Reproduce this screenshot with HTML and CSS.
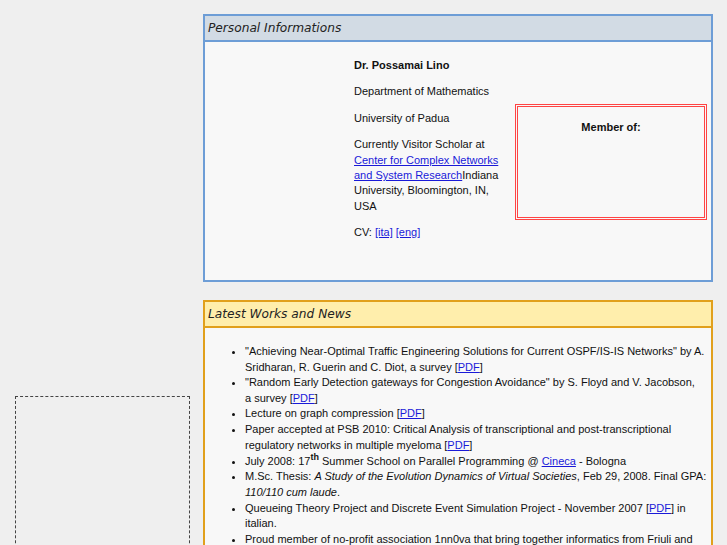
FILE: index.html
```html
<!DOCTYPE html>
<html>
<head>
<meta charset="utf-8">
<title>Possamai Lino</title>
<link rel="stylesheet" href="styles.css">
</head>
<body>
<div class="page">
  <aside class="side">
    <div class="dashed"></div>
  </aside>
  <main class="main">
    <section class="box box-blue">
      <h2 class="box-title">Personal Informations</h2>
      <div class="box-body info">
        <div class="info-text">
          <p><b>Dr. Possamai Lino</b></p>
          <p>Department of Mathematics</p>
          <p>University of Padua</p>
          <p>Currently Visitor Scholar at <a href="#">Center for Complex Networks and System Research</a>Indiana University, Bloomington, IN, USA</p>
          <p>CV: <a href="#">[ita]</a> <a href="#">[eng]</a></p>
        </div>
        <div class="member">
          <p><b>Member of:</b></p>
        </div>
      </div>
    </section>
    <section class="box box-yellow">
      <h2 class="box-title">Latest Works and News</h2>
      <div class="box-body">
        <ul class="news">
          <li>"Achieving Near-Optimal Traffic Engineering Solutions for Current OSPF/IS-IS Networks" by A. Sridharan, R. Guerin and C. Diot, a survey [<a href="#">PDF</a>]</li>
          <li>"Random Early Detection gateways for Congestion Avoidance" by S. Floyd and V. Jacobson, a&nbsp;survey [<a href="#">PDF</a>]</li>
          <li>Lecture on graph compression [<a href="#">PDF</a>]</li>
          <li>Paper accepted at PSB 2010: Critical Analysis of transcriptional and post-transcriptional regulatory networks in multiple myeloma [<a href="#">PDF</a>]</li>
          <li>July 2008: 17<sup>th</sup> Summer School on Parallel Programming @ <a href="#">Cineca</a> - Bologna</li>
          <li>M.Sc. Thesis: <i>A Study of the Evolution Dynamics of Virtual Societies</i>, Feb 29, 2008. Final GPA: <i>110/110 cum laude</i>.</li>
          <li>Queueing Theory Project and Discrete Event Simulation Project - November 2007 [<a href="#">PDF</a>] in italian.</li>
          <li>Proud member of no-profit association 1nn0va that bring together informatics from Friuli and Veneto.</li>
        </ul>
      </div>
    </section>
  </main>
</div>
</body>
</html>
```
FILE: styles.css
```css
html, body {
  margin: 0;
  padding: 0;
}
body {
  background: #efefef;
  font-family: "Liberation Sans", Arial, sans-serif;
  font-size: 11px;
  color: #111;
}
.page {
  display: flex;
  align-items: flex-start;
  padding-top: 14px;
}
.side {
  width: 203px;
  flex: none;
  padding-top: 382px;
}
.dashed {
  margin-left: 15px;
  width: 173px;
  height: 200px;
  border: 1px dashed #444;
}
.main {
  width: 510px;
  flex: none;
}
.box {
  border: 2px solid #6d9dd6;
  background: #f8f8f8;
  margin-bottom: 18px;
}
.box-title {
  margin: 0;
  font-family: "DejaVu Sans", Verdana, sans-serif;
  font-style: italic;
  font-weight: normal;
  font-size: 12.2px;
  height: 24px;
  line-height: 24px;
  padding-left: 3px;
  border-bottom: 2px solid #6d9dd6;
  background: #d2dbe4;
  color: #222;
}
.box-yellow {
  border-color: #e1a01c;
}
.box-yellow .box-title {
  border-bottom-color: #e1a01c;
  background: #ffeeac;
}
.box-body {
  padding: 4px 0;
}
.info {
  display: flex;
  height: 230px;
  padding: 5px 0 3px 149px;
}
.info p {
  margin: 11px 0;
  line-height: 15.4px;
}
.info-text {
  width: 153px;
  align-self: flex-start;
}
.member {
  margin-left: 8px;
  width: 186px;
  height: 110px;
  border: 3px double #ff4444;
  align-self: center;
  text-align: center;
}
.member p {
  margin: 13px 0 0;
}
a {
  color: #1a1ad8;
}
.news {
  margin: 12px 3px 0 0;
  padding-left: 40px;
  line-height: 15.6px;
}
.news sup {
  font-size: 9px;
  font-weight: bold;
  line-height: 1;
}
```
